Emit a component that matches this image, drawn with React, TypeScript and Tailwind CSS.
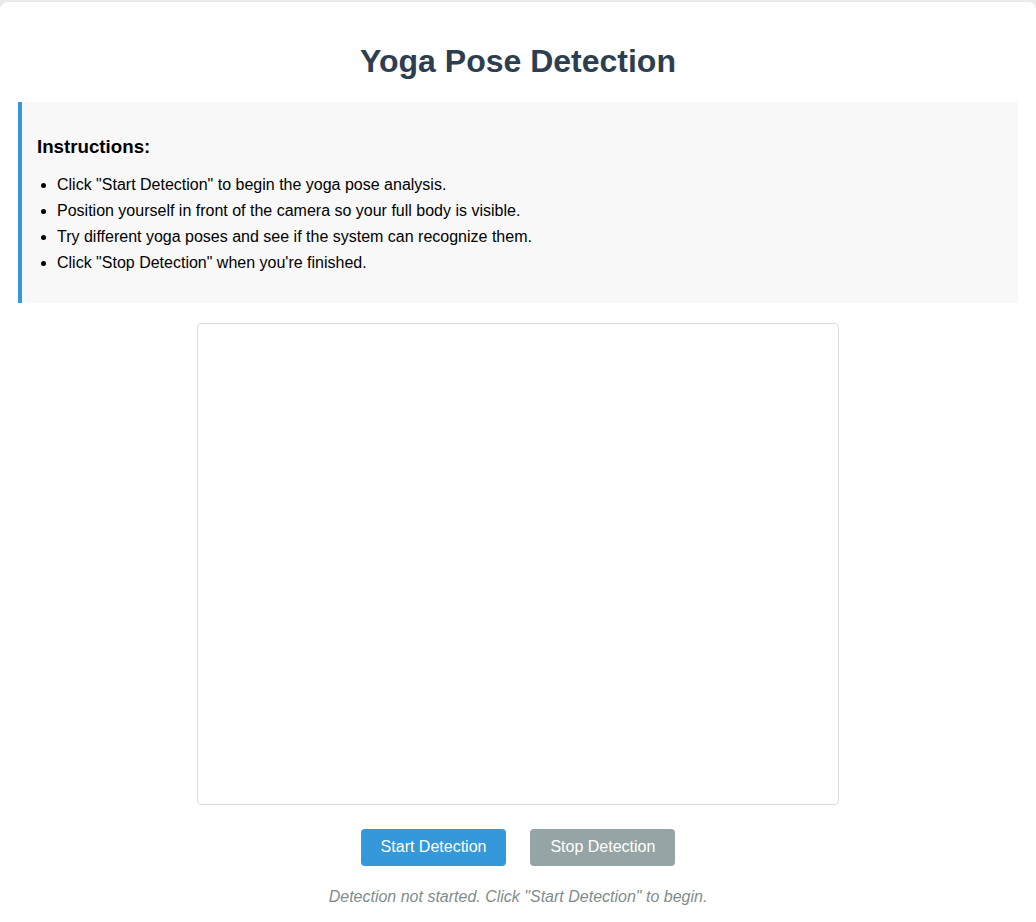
export default function App() {
  const steps = [
    'Click "Start Detection" to begin the yoga pose analysis.',
    "Position yourself in front of the camera so your full body is visible.",
    "Try different yoga poses and see if the system can recognize them.",
    'Click "Stop Detection" when you\'re finished.',
  ];

  return (
    <div
      className="min-h-screen bg-[#ebebeb] pt-[2px]"
      style={{ fontFamily: '"Liberation Sans", Arial, sans-serif' }}
    >
      <div className="min-h-[920px] rounded-t-lg bg-white px-[18px] pt-[20px] pb-8">
        {/* Title */}
        <h1 className="mt-[21px] mb-[22px] text-center text-[32px] leading-[37px] font-bold text-[#2c3e50]">
          Yoga Pose Detection
        </h1>

        {/* Instructions */}
        <div className="w-[1000px] border-l-4 border-[#3498db] bg-[#f8f8f8] px-[15px] pt-[15px] pb-[23px]">
          <h3 className="mt-[19px] mb-[18px] text-[18.72px] leading-[21.5px] font-bold text-black">
            Instructions:
          </h3>
          <ul className="list-disc pl-5 text-base leading-[18px] text-black">
            {steps.map((s) => (
              <li key={s} className="mb-2">
                {s}
              </li>
            ))}
          </ul>
        </div>

        {/* Video area */}
        <div className="mt-5 flex justify-center">
          <div className="h-[482px] w-[642px] rounded border border-[#ddd] bg-white" />
        </div>

        {/* Controls */}
        <div className="mt-[24px] flex justify-center gap-6">
          <button className="h-[37px] rounded bg-[#3498db] px-5 text-base text-white">
            Start Detection
          </button>
          <button className="h-[37px] rounded bg-[#95a5a6] px-5 text-base text-white">
            Stop Detection
          </button>
        </div>

        {/* Status */}
        <p className="mt-[22px] text-center text-base leading-[18px] text-[#7f8c8d] italic">
          Detection not started. Click "Start Detection" to begin.
        </p>
      </div>
    </div>
  );
}
